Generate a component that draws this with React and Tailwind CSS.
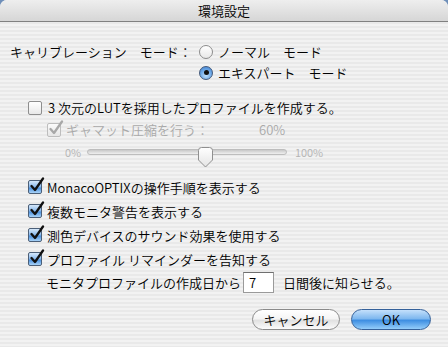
import React from 'react'

const jp = "font-['Noto_Sans_CJK_JP','Noto_Sans',sans-serif]"

const CheckBox = ({ checked, disabled }) => {
  const box = disabled
    ? 'bg-[linear-gradient(180deg,#fbfbfb,#e6e6e6)] border-[#bdbdbd]'
    : checked
      ? 'bg-[linear-gradient(180deg,#d6e8fa_0%,#8fbdee_45%,#4f93de_60%,#a9d3f8_100%)] border-[#4b5f78]'
      : 'bg-[linear-gradient(180deg,#ffffff,#e9e9e9)] border-[#8e8e8e]'
  return (
    <span className="relative flex h-[14px] w-[14px] shrink-0">
      <span className={`h-[14px] w-[14px] rounded-[2px] border ${box}`} />
      {checked && (
        <svg className="absolute left-[1px] top-[-3px]" width="16" height="16" viewBox="0 0 16 16">
          <path
            d="M2.5 9 L6 13 L14 1.5"
            fill="none"
            stroke={disabled ? '#a8a8a8' : '#111'}
            strokeWidth="2.3"
            strokeLinecap="round"
            strokeLinejoin="round"
          />
        </svg>
      )}
    </span>
  )
}

const Radio = ({ on }) => (
  <span
    className={`flex h-[14px] w-[14px] shrink-0 items-center justify-center rounded-full border ${
      on
        ? 'border-[#43597a] bg-[radial-gradient(circle_at_50%_70%,#bfe0fc_0%,#6aa6e6_55%,#3c7dcc_100%)]'
        : 'border-[#8c8c8c] bg-[linear-gradient(180deg,#ffffff,#e8e8e8)]'
    }`}
  >
    {on && <span className="h-[5px] w-[5px] rounded-full bg-[#111]" />}
  </span>
)

const CheckRow = ({ children }) => (
  <div className="flex h-[24px] items-center gap-[5px] pl-[28px]">
    <CheckBox checked />
    <span>{children}</span>
  </div>
)

export default function App() {
  return (
    <div className={`h-[347px] w-[448px] overflow-hidden bg-[#6f8fb9] text-[13px] font-[350] leading-none text-black ${jp}`}>
      <div className="flex h-full flex-col overflow-hidden rounded-t-[7px] bg-[repeating-linear-gradient(180deg,#f2f2f2_0px,#f2f2f2_2px,#e9e9e9_2px,#e9e9e9_4px)]">
        <div className="flex h-[22px] shrink-0 items-center justify-center border-b border-[#808080] bg-[linear-gradient(180deg,#eeeeee,#d6d6d6)]">
          <span className="text-[13px]">環境設定</span>
        </div>

        <div className="mt-[19px] flex">
          <div className="flex h-[21px] w-[199px] items-center pl-[10px]">キャリブレーション　モード：</div>
          <div className="flex flex-col">
            <div className="flex h-[21px] items-center gap-[5px]">
              <Radio />
              <span>ノーマル　モード</span>
            </div>
            <div className="flex h-[21px] items-center gap-[5px]">
              <Radio on />
              <span>エキスパート　モード</span>
            </div>
          </div>
        </div>

        <div className="mt-[14px] flex h-[21px] items-center gap-[6px] pl-[28px]">
          <CheckBox />
          <span>3 次元のLUTを採用したプロファイルを作成する。</span>
        </div>

        <div className="flex h-[23px] items-center gap-[5px] pl-[47px] text-[#a9a9a9]">
          <CheckBox checked disabled />
          <span className="w-[188px]">ギャマット圧縮を行う：</span>
          <span>60%</span>
        </div>

        <div className="flex h-[22px] items-center pl-[65px] text-[11px] text-[#b3b3b3]">
          <span className="w-[22px]">0%</span>
          <div className="relative h-[6px] w-[200px] rounded-full border border-[#bdbdbd] bg-[linear-gradient(180deg,#c8c8c8,#efefef)]">
            <svg className="absolute left-[109px] top-[-3px]" width="17" height="21" viewBox="0 0 17 21">
              <defs>
                <linearGradient id="th" x1="0" y1="0" x2="0" y2="1">
                  <stop offset="0" stopColor="#ffffff" />
                  <stop offset="1" stopColor="#e4e4e4" />
                </linearGradient>
              </defs>
              <path
                d="M1.5 3.5 Q1.5 0.5 4.5 0.5 H12.5 Q15.5 0.5 15.5 3.5 V13 L8.5 20 L1.5 13 Z"
                fill="url(#th)"
                stroke="#8f8f8f"
              />
            </svg>
          </div>
          <span className="ml-[8px]">100%</span>
        </div>

        <div className="mt-[12px]">
          <CheckRow>MonacoOPTIXの操作手順を表示する</CheckRow>
          <CheckRow>複数モニタ警告を表示する</CheckRow>
          <CheckRow>測色デバイスのサウンド効果を使用する</CheckRow>
          <CheckRow>プロファイル リマインダーを告知する</CheckRow>
        </div>

        <div className="flex h-[22px] items-center pl-[46px]">
          <span className="w-[197px]">モニタプロファイルの作成日から</span>
          <div className="flex h-[21px] w-[31px] items-center border border-[#9a9a9a] border-t-[#6f6f6f] bg-white pl-[5px]">7</div>
          <span className="ml-[9px]">日間後に知らせる。</span>
        </div>

        <div className="mt-[16px] flex justify-end gap-[11px] pr-[17px]">
          <button
            type="button"
            className="flex h-[21px] w-[88px] items-center justify-center rounded-full border border-[#8a8a8a] bg-[linear-gradient(180deg,#ffffff_0%,#f5f5f5_45%,#e1e1e1_55%,#fbfbfb_100%)] text-[13px]"
          >
            キャンセル
          </button>
          <button
            type="button"
            className="flex h-[21px] w-[80px] items-center justify-center rounded-full border border-[#35619a] bg-[linear-gradient(180deg,#c4e0fb_0%,#7fb8ef_45%,#3f8fe2_55%,#94cdfa_100%)] text-[13px]"
          >
            OK
          </button>
        </div>
      </div>
    </div>
  )
}
